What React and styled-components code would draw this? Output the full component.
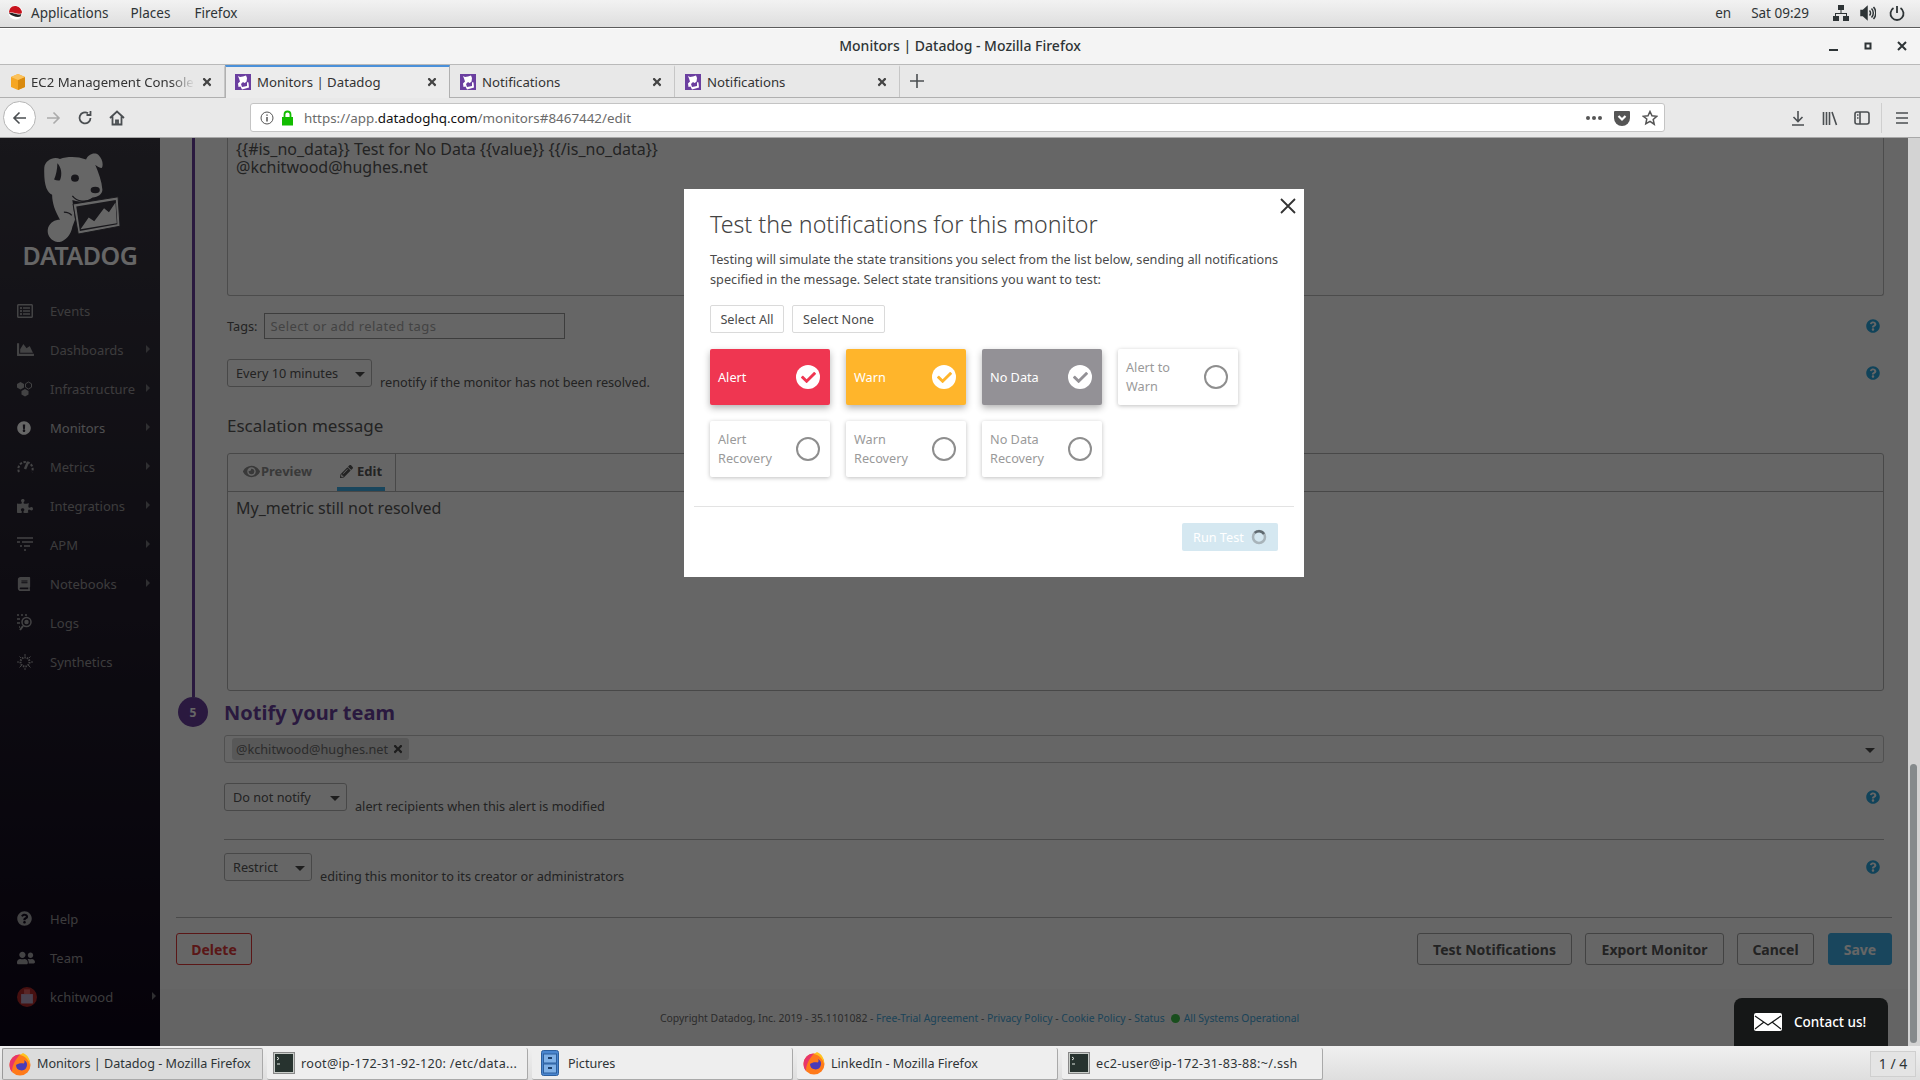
import React from 'react';
import styled, { createGlobalStyle } from 'styled-components';
import {
  FaBook,
  FaChartArea,
  FaCheck,
  FaExclamationCircle,
  FaEye,
  FaPencilAlt,
  FaPuzzlePiece,
  FaQuestionCircle,
  FaRegListAlt,
  FaTimes,
  FaUserFriends,
} from 'react-icons/fa';

const GlobalStyle = createGlobalStyle`
  html, body {
    margin: 0;
    height: 100%;
    overflow: hidden;
    font-family: "Noto Sans", "Open Sans", sans-serif;
  }
  * { box-sizing: border-box; }
`;

const Screen = styled.div`
  width: 1920px;
  height: 1080px;
  display: flex;
  flex-direction: column;
  overflow: hidden;
`;

/* desktop chrome */
const TopBar = styled.div`
  height: 28px;
  flex: none;
  display: flex;
  align-items: center;
  padding: 0 15px 2px 8px;
  font-size: 13.5px;
  color: #2e3436;
  background: linear-gradient(#f2f2f2, #dedede);
  border-bottom: 1px solid #5c5c5c;
`;

const TopItem = styled.span`
  margin-left: ${(p) => p.$gap || 0}px;
`;

const TopIcon = styled(TopItem)`
  display: flex;
`;

const TopRight = styled.div`
  margin-left: auto;
  display: flex;
  align-items: center;
  color: #2e3436;
`;

const TitleBar = styled.div`
  height: 37px;
  flex: none;
  position: relative;
  display: flex;
  align-items: center;
  justify-content: center;
  padding-bottom: 2px;
  font-size: 14px;
  font-weight: 500;
  color: #2e3436;
  background: #f4f4f4;
  border-top: 1px solid #fff;
  border-bottom: 1px solid #b9b9b9;
`;

const WindowControls = styled.div`
  position: absolute;
  right: 11px;
  top: 10px;
  display: flex;
  gap: 20px;
`;

const TabStrip = styled.div`
  height: 33px;
  flex: none;
  display: flex;
  align-items: stretch;
  background: #e8e8e8;
  border-bottom: 1px solid #b0b0b0;
`;

const Tab = styled.div`
  width: 225px;
  display: flex;
  align-items: center;
  gap: 6px;
  padding: 0 11px 1px 9px;
  font-size: 13.2px;
  color: #333;
  position: relative;
  background: ${(p) => (p.$active ? '#ececec' : 'transparent')};
  border-top: 2px solid ${(p) => (p.$active ? '#4a90d9' : 'transparent')};
  border-right: 1px solid ${(p) => (p.$active ? '#b0b0b0' : '#c6c6c6')};
  border-left: 1px solid ${(p) => (p.$active ? '#b0b0b0' : 'transparent')};
  margin-bottom: ${(p) => (p.$active ? '-1px' : '0')};
`;

const TabLabel = styled.span`
  flex: 1;
  overflow: hidden;
  white-space: nowrap;
  -webkit-mask-image: ${(p) => (p.$fade ? 'linear-gradient(90deg, #000 85%, transparent)' : 'none')};
`;

const NewTab = styled.div`
  width: 33px;
  display: flex;
  align-items: center;
  justify-content: center;
`;

const NavBar = styled.div`
  height: 40px;
  flex: none;
  display: flex;
  align-items: center;
  background: #e9e9e9;
  border-bottom: 1px solid #a8a8a8;
  padding-left: 3px;
`;

const BackButton = styled.div`
  width: 33px;
  height: 33px;
  margin-right: 1px;
  border-radius: 50%;
  background: #fff;
  border: 1px solid #b5b5b5;
  display: flex;
  align-items: center;
  justify-content: center;
`;

const NavIcon = styled.div`
  width: ${(p) => p.$w || 32}px;
  margin-left: ${(p) => p.$left || 0}px;
  flex: none;
  display: flex;
  align-items: center;
  justify-content: center;
`;

const UrlBar = styled.div`
  width: 1415px;
  height: 29px;
  margin-left: 117px;
  flex: none;
  display: flex;
  align-items: center;
  background: #fff;
  border: 1px solid #c4c4c4;
  border-radius: 3px;
  padding-left: 9px;
  font-size: 13.4px;
  color: #6b6b6b;
`;

const UrlText = styled.span`
  margin-left: 10px;
  flex: 1;
  b {
    font-weight: 400;
    color: #111;
  }
`;

const NavSeparator = styled.div`
  width: 1px;
  height: 30px;
  background: #cfcfcf;
  margin: 0 3px 0 3px;
`;

const TaskBar = styled.div`
  height: 34px;
  flex: none;
  display: flex;
  align-items: center;
  gap: 4px;
  padding: 1px 4px 0 2px;
  font-size: 12.6px;
  color: #2e3436;
  background: linear-gradient(#f0f0f0, #dedede);
`;

const TaskItem = styled.div`
  width: 261px;
  height: 32px;
  flex: none;
  display: flex;
  align-items: center;
  gap: 6px;
  padding-left: 6px;
  white-space: nowrap;
  overflow: hidden;
  letter-spacing: ${(p) => (p.$digits ? '0.3px' : '0')};
  background: ${(p) => (p.$active ? '#dcdcdc' : '#eeeeee')};
  border: 1px solid #c6c6c6;
  border-top: ${(p) => (p.$active ? '1px solid #9a9a9a' : '0')};
  border-left: ${(p) => (p.$active ? '1px solid #9a9a9a' : '0')};
  border-right: 1px solid #a9a9a9;
  border-bottom: 1px solid #a9a9a9;
  border-radius: 2px;
`;

const Pager = styled.div`
  margin-left: auto;
  width: 46px;
  height: 26px;
  display: flex;
  align-items: center;
  justify-content: center;
  background: #e4e4e4;
  border: 1px solid #cfcfcf;
  font-size: 14px;
`;

/* firefox content */
const Viewport = styled.div`
  flex: 1;
  min-height: 0;
  display: flex;
  position: relative;
  overflow: hidden;
`;

const PageArea = styled.div`
  flex: 1;
  min-width: 0;
  display: flex;
  position: relative;
  overflow: hidden;
  background: #fff;
`;

const ScrollTrack = styled.div`
  width: 12px;
  flex: none;
  background: #d3d3d3;
  padding: 626px 3px 3px 2px;
`;

const ScrollThumb = styled.div`
  height: 100%;
  background: #858a8c;
  border-radius: 4px;
`;

const Backdrop = styled.div`
  position: absolute;
  inset: 0;
  background: rgba(0, 0, 0, 0.6);
`;

/* sidebar */
const Sidebar = styled.nav`
  width: 160px;
  flex: none;
  display: flex;
  flex-direction: column;
  background: linear-gradient(#3c3a44, #0d0519);
  color: #989699;
  font-size: 13px;
`;

const LogoBlock = styled.div`
  height: 153px;
  padding-top: 13px;
  display: flex;
  flex-direction: column;
  align-items: center;
`;

const LogoWord = styled.div`
  font-size: 25px;
  line-height: 26px;
  font-weight: 600;
  letter-spacing: -0.5px;
  color: #fff;
`;

const NavList = styled.div`
  display: flex;
  flex-direction: column;
`;

const SideItem = styled.div`
  height: 39px;
  display: flex;
  align-items: center;
  padding-left: 17px;
  position: relative;
  color: ${(p) => (p.$on ? '#c4c3c6' : 'inherit')};
`;

const SideIcon = styled.div`
  width: 33px;
  flex: none;
  display: flex;
  align-items: center;
  color: ${(p) => (p.$on ? '#fff' : '#a8a7ab')};
`;

const SideArrow = styled.div`
  position: absolute;
  left: ${(p) => p.$left || 146}px;
  top: 15px;
  width: 0;
  height: 0;
  border-left: 4px solid #77757c;
  border-top: 4px solid transparent;
  border-bottom: 4px solid transparent;
`;

const SideFoot = styled.div`
  margin-top: auto;
  padding-bottom: 30px;
`;

/* monitor form */
const Main = styled.main`
  flex: 1;
  min-width: 0;
  display: flex;
  flex-direction: column;
  color: #575757;
  font-size: 12.7px;
`;

const FormBody = styled.div`
  height: 852px;
  flex: none;
  padding: 0 16px 0 15px;
  border-bottom: 1px solid #fafafa;
`;

const Stepper = styled.section`
  margin: 0 8px 0 17px;
  padding-left: 32px;
  height: 559px;
  border-left: 3px solid #6a3f9e;
`;

const MessageBox = styled.div`
  height: 158px;
  padding: 2px 8px 0;
  border: 1px solid #bdbdbd;
  border-top: 0;
  font-size: 16px;
  line-height: 18px;
  overflow: hidden;
  border-radius: 0 0 3px 3px;
`;

const TagsRow = styled.div`
  margin-top: 17px;
  height: 26px;
  display: flex;
  align-items: center;
  gap: 7px;
  padding-right: 4px;
`;

const TagsInput = styled.div`
  width: 301px;
  height: 26px;
  display: flex;
  align-items: center;
  padding: 0 5px;
  border: 1px solid #9a9a9a;
  color: #a8a8a8;
  font-size: 13px;
  letter-spacing: 0.4px;
`;

const HelpMark = styled.span`
  margin-left: auto;
  display: flex;
  align-self: center;
  color: #2aa8e0;
  font-size: 14px;
`;

const OptionRow = styled.div`
  margin-top: ${(p) => p.$top || 0}px;
  height: 28px;
  display: flex;
  align-items: flex-end;
  gap: 8px;
  padding-right: 4px;
`;

const Dropdown = styled.div`
  width: ${(p) => p.$w}px;
  height: 28px;
  flex: none;
  display: flex;
  align-items: center;
  justify-content: space-between;
  padding: 0 6px 0 8px;
  border: 1px solid #b5b5b5;
  border-radius: 3px;
  background: #fff;
`;

const Caret = styled.span`
  width: 0;
  height: 0;
  margin-top: 3px;
  margin-right: ${(p) => p.$right || 0}px;
  border-top: 5px solid #4d4d4d;
  border-left: 5px solid transparent;
  border-right: 5px solid transparent;
`;

const OptionText = styled.span`
  line-height: 18px;
  margin-bottom: -4px;
`;

const SubHeading = styled.h3`
  margin: 27px 0 0;
  font-size: 17px;
  line-height: 24px;
  font-weight: 400;
`;

const Editor = styled.div`
  margin-top: 15px;
  height: 238px;
  border: 1px solid #b5b5b5;
  border-radius: 3px;
`;

const EditorTabs = styled.div`
  width: 168px;
  height: 37px;
  display: flex;
  align-items: stretch;
  padding-left: 12px;
  border-right: 1px solid #b5b5b5;
`;

const EditorTab = styled.div`
  margin-right: 22px;
  display: flex;
  align-items: center;
  gap: ${(p) => (p.$on ? 4 : 1)}px;
  padding: 1px 3px 0;
  font-size: 13px;
  font-weight: 700;
  color: ${(p) => (p.$on ? '#575757' : '#8f8f8f')};
  border-bottom: 4px solid ${(p) => (p.$on ? '#3fb0e8' : 'transparent')};
  svg {
    font-size: ${(p) => (p.$on ? 13 : 17)}px;
  }
`;

const EditorText = styled.div`
  border-top: 1px solid #b5b5b5;
  padding: 6px 8px;
  font-size: 16px;
  line-height: 21px;
`;

const StepHeader = styled.div`
  display: flex;
  align-items: center;
  gap: 16px;
  margin-left: 3px;
  height: 30px;
`;

const StepBadge = styled.div`
  width: 30px;
  height: 30px;
  border-radius: 50%;
  display: flex;
  align-items: center;
  justify-content: center;
  font-size: 12px;
  font-weight: 700;
  color: #fff;
  background: #6a3f9e;
`;

const StepTitle = styled.h2`
  margin: 0;
  font-size: 20px;
  font-weight: 700;
  color: #6a3f9e;
`;

const StepBody = styled.div`
  margin: 8px 8px 0 49px;
`;

const RecipientInput = styled.div`
  height: 28px;
  display: flex;
  align-items: center;
  justify-content: space-between;
  padding: 0 7px;
  border: 1px solid #c8c8c8;
  border-radius: 3px;
`;

const Chip = styled.span`
  height: 22px;
  display: flex;
  align-items: center;
  gap: 4px;
  padding: 0 5px 0 4px;
  background: #dcdcdc;
  border-radius: 3px;
  color: #6e6e6e;
  svg {
    font-size: 12px;
    color: #4a4a4a;
  }
`;

const Rule = styled.hr`
  margin: ${(p) => p.$m};
  height: 1px;
  border: 0;
  background: #b8b8b8;
`;

const Actions = styled.div`
  margin-top: 15px;
  display: flex;
  gap: 13px;
  padding-left: 1px;
`;

const ActionButton = styled.button`
  height: 32px;
  width: ${(p) => p.$w}px;
  margin-right: ${(p) => p.$after || 0}px;
  margin-left: ${(p) => p.$before || 0}px;
  font-family: inherit;
  font-size: 14px;
  font-weight: 700;
  border-radius: 3px;
  padding: 0;
  color: ${(p) => (p.$danger ? '#e03a3a' : p.$primary ? '#fff' : '#575757')};
  background: ${(p) => (p.$primary ? '#3fb0e8' : 'transparent')};
  border: 1px solid ${(p) => (p.$danger ? '#e03a3a' : p.$primary ? '#3fb0e8' : '#a5a5a5')};
`;

const Footer = styled.footer`
  flex: 1;
  background: #fafafa;
  display: flex;
  align-items: center;
  padding: 0 0 0 500px;
  font-size: 10.4px;
  white-space: pre;
  color: #6c6c6c;
  a {
    color: #45a8dc;
  }
`;

const StatusDot = styled.span`
  width: 9px;
  height: 9px;
  border-radius: 50%;
  margin: 0 4px 0 6px;
  background: #3fc24a;
`;

/* modal */
const Modal = styled.div`
  position: absolute;
  left: 684px;
  top: 51px;
  width: 620px;
  height: 388px;
  padding: 21px 26px 0;
  background: #fff;
  color: #4a4a4a;
  font-size: 12.7px;
`;

const CloseButton = styled.div`
  position: absolute;
  right: 6px;
  top: 7px;
  display: flex;
`;

const ModalTitle = styled.h2`
  margin: 0;
  font-size: 23.2px;
  line-height: 28px;
  font-weight: 300;
  color: #444;
`;

const ModalText = styled.p`
  margin: 11px 0 0;
  line-height: 20px;
  white-space: nowrap;
`;

const SelectRow = styled.div`
  display: flex;
  gap: 8px;
  margin-top: 16px;
`;

const SelectButton = styled.div`
  height: 28px;
  width: ${(p) => p.$w}px;
  display: flex;
  align-items: center;
  justify-content: center;
  border: 1px solid #dadada;
  border-radius: 2px;
`;

const Cards = styled.div`
  margin-top: 16px;
  display: grid;
  grid-template-columns: repeat(4, 120px);
  grid-auto-rows: 56px;
  gap: 16px;
`;

const Card = styled.div`
  display: flex;
  align-items: center;
  justify-content: space-between;
  padding: 0 8px;
  line-height: 19px;
  border-radius: 2px;
  color: ${(p) => (p.$color ? '#fff' : '#9a9a9a')};
  background: ${(p) => p.$color || '#fff'};
  box-shadow: ${(p) =>
    p.$color ? '0 3px 7px rgba(0, 0, 0, 0.3)' : '0 1px 4px rgba(0, 0, 0, 0.25)'};
`;

const CardLabel = styled.span`
  width: 76px;
`;

const Radio = styled.span`
  width: 24px;
  height: 24px;
  flex: none;
  margin-right: 2px;
  border: 2px solid #8e8e8e;
  border-radius: 50%;
`;

const Tick = styled.span`
  width: 24px;
  height: 24px;
  flex: none;
  margin-right: 2px;
  display: flex;
  align-items: center;
  justify-content: center;
  border-radius: 50%;
  background: #fff;
  color: ${(p) => p.$color};
  font-size: 15px;
`;

const ModalRule = styled.hr`
  margin: 29px -16px 0;
  height: 1px;
  border: 0;
  background: #e3e3e3;
`;

const ModalFoot = styled.div`
  margin-top: 16px;
  display: flex;
  justify-content: flex-end;
`;

const RunButton = styled.div`
  width: 96px;
  height: 28px;
  display: flex;
  align-items: center;
  justify-content: space-between;
  padding: 0 11px;
  border-radius: 2px;
  color: #fff;
  background: #d5e8f1;
`;

const Contact = styled.div`
  position: absolute;
  right: 20px;
  bottom: 0;
  width: 154px;
  height: 48px;
  display: flex;
  align-items: center;
  gap: 12px;
  padding-left: 20px;
  border-radius: 8px 8px 0 0;
  background: #151717;
  color: #fff;
  font-size: 13.5px;
  font-weight: 500;
`;

/* drawn icons */
const Stroke = ({ w = 16, h = 16, vb = '0 0 16 16', sw = 1.6, color = '#4b4f52', children }) => (
  <svg width={w} height={h} viewBox={vb} fill="none" stroke={color} strokeWidth={sw}>
    {children}
  </svg>
);

const RedHat = () => (
  <svg width="15" height="15" viewBox="0 0 15 15">
    <circle cx="7.5" cy="7.5" r="7" fill="#fff" />
    <path d="M1 8c0-4 2-7 6-7 3 0 6 2 7 6 0 2-2 2-5 1.500C6 8 3 7 1 8z" fill="#c8141e" />
    <path d="M1 8.500c2-1 5 0 8 .8 2 .5 4 .3 4.500-.8l-1 3c-3 1-8 0-11.500-3z" fill="#222" />
  </svg>
);

const DatadogFav = () => (
  <svg width="16" height="16" viewBox="0 0 16 16" style={{ flex: 'none' }}>
    <rect width="16" height="16" fill="#6b3fa0" />
    <path d="M3 2l2 1 3-.5 3-1 1 2.500-.5 4 2 .5.500 5-7 2-1.500-3-2 .5-.5-3.500 2-2-1-3z" fill="#fff" />
    <path d="M6 10l2-2 1.500 1L12 7.500V12l-5 1z" fill="#6b3fa0" />
  </svg>
);

const AwsBox = () => (
  <svg width="16" height="18" viewBox="0 0 16 18" style={{ flex: 'none', marginRight: -1 }}>
    <path d="M8 1l7 3v10l-7 3-7-3V4z" fill="#f5a623" />
    <path d="M8 7v10l7-3V4z" fill="#d98a0e" />
    <path d="M1 4l7 3 7-3-7-3z" fill="#fbc25c" />
  </svg>
);

const Firefox = () => (
  <svg width="22" height="24" viewBox="0 0 22 24" style={{ flex: 'none' }}>
    <circle cx="11" cy="13" r="10.500" fill="#ff7a1a" />
    <path d="M11 2.500C5 2.500.500 7.500.500 13c0 3 1 5 2.500 7 0-6 3-12 8-17.500z" fill="#e8356a" />
    <path d="M7 13a5.500 5.500 0 1 0 8-5c1 2 .5 3-.5 3.500-2-.5-5-.5-7.500 1.500z" fill="#4a3bb8" />
    <path d="M11 3c5 1 9 5 10 10 .5-5-2-10-7-12z" fill="#ffc21f" />
  </svg>
);

const Terminal = () => (
  <svg width="22" height="22" viewBox="0 0 22 22" style={{ flex: 'none' }}>
    <rect x=".5" y=".5" width="21" height="21" fill="#c9cdc9" stroke="#888" />
    <rect x="2" y="2" width="18" height="18" fill="#27332f" />
    <path d="M4 5l2 1.500L4 8M4 12h3" stroke="#dfe5df" fill="none" />
  </svg>
);

const Cabinet = () => (
  <svg width="18" height="26" viewBox="0 0 18 26" style={{ flex: 'none', margin: '0 3px 0 3px' }}>
    <rect x=".5" y=".5" width="17" height="25" rx="2" fill="#4a86cf" stroke="#2c5f9e" />
    <rect x="2.500" y="4" width="13" height="9" fill="#7fb0e6" stroke="#2c5f9e" />
    <rect x="2.500" y="14" width="13" height="9" fill="#7fb0e6" stroke="#2c5f9e" />
    <rect x="7" y="7" width="4" height="2" fill="#1d3f6b" />
    <rect x="7" y="17" width="4" height="2" fill="#1d3f6b" />
  </svg>
);

const DogLogo = () => (
  <svg width="80" height="91" viewBox="125 35 245 278" style={{ marginLeft: 3, flex: 'none' }}>
    <path
      fill="#fff"
      d="M132 85c2-22 30-36 48-26 24-8 54-8 80 2 6-16 26-24 38-14 12 12 16 30 10 40-6 0-14-4-20-10 10 24 20 50 22 76 0 14-14 22-30 24-18 12-42 16-62 8l8 60-8 22c-4 26-26 50-46 46-22-4-34-24-28-44 6-16 20-24 36-24-14-24-24-50-24-76-16-8-26-30-24-84z"
    />
    <path fill="#3c3a44" d="M172 72c12 12 16 34 8 52-6 2-12 0-18-2 6-14 10-32 10-50z" />
    <ellipse cx="226" cy="118" rx="12" ry="11" fill="#3c3a44" />
    <ellipse cx="288" cy="154" rx="14" ry="10" fill="#3c3a44" />
    <path d="M218 172c14 18 40 22 70 8" stroke="#3c3a44" strokeWidth="4" fill="none" />
    <path d="M216 232c-6-8-14-10-24-10" stroke="#3c3a44" strokeWidth="4" fill="none" />
    <path d="M220 197l138-22 6 90-128 24z" fill="#fff" stroke="#3c3a44" strokeWidth="3" />
    <path d="M230 205l121-20 5 74-115 21z" fill="#3c3a44" />
    <path d="M243 274l25-36 17 12 30-40 15 12 20-30 4 64z" fill="#fff" />
  </svg>
);

const Hexes = () => (
  <svg width="16" height="16" viewBox="0 0 16 16">
    <path d="M4.500 1l3.500 2v3.500L4.500 8.500 1 6.500V3z" fill="currentColor" transform="translate(-1 0)" />
    <path d="M11.500 1l3 1.800v3.400l-3 1.800-3-1.800V2.800z" fill="none" stroke="currentColor" />
    <path d="M8 8l3.500 2v3.500L8 15.500l-3.500-2V10z" fill="currentColor" />
  </svg>
);

const Gauge = () => (
  <svg width="17" height="15" viewBox="0 0 17 15" fill="none" stroke="currentColor" strokeWidth="2">
    <path d="M2 13A7 7 0 0 1 8.500 3a7 7 0 0 1 6.500 10" strokeDasharray="2.500 1.500" />
    <path d="M8 10l3-7" strokeWidth="2.500" />
  </svg>
);

const FunnelLines = () => (
  <svg width="16" height="15" viewBox="0 0 16 15" fill="none" stroke="currentColor" strokeWidth="1.500">
    <path d="M0 1h16M0 5h3M5 5h11M3 9h2M7 9h6M7 13h2" />
  </svg>
);

const LogsIcon = () => (
  <svg width="16" height="17" viewBox="0 0 16 17" fill="none" stroke="currentColor" strokeWidth="1.500">
    <path d="M0 1h2M4 1h2M8 1h2M0 5h3M0 9h3M2 13h1" />
    <circle cx="9.500" cy="8" r="4.500" />
    <circle cx="9.500" cy="8" r="1.500" fill="currentColor" />
    <path d="M6 12l-3 4" strokeWidth="2" />
  </svg>
);

const SynthIcon = () => (
  <svg width="16" height="16" viewBox="0 0 16 16" fill="none" stroke="currentColor">
    <circle cx="8" cy="8" r="4.500" strokeWidth="2" strokeDasharray="1.500 1" />
    <path d="M8 0v2M8 14v2M0 8h2M14 8h2M2.500 2.500l1.500 1.500M13.500 2.500L12 4M2.500 13.500L4 12M13.500 13.500L12 12" />
  </svg>
);

const Avatar = () => (
  <svg width="20" height="20" viewBox="0 0 17 17">
    <circle cx="8.500" cy="8.500" r="8.500" fill="#b02a2a" />
    <rect x="3.500" y="6" width="10" height="8" fill="#b9a7c9" />
    <rect x="6" y="2" width="5" height="4" fill="#e06060" />
  </svg>
);

const CheckedCard = ({ label, color }) => (
  <Card $color={color}>
    <CardLabel>{label}</CardLabel>
    <Tick $color={color}>
      <FaCheck />
    </Tick>
  </Card>
);

const OpenCard = ({ label }) => (
  <Card>
    <CardLabel>{label}</CardLabel>
    <Radio />
  </Card>
);

const sideItems = [
  { label: 'Events', icon: <FaRegListAlt size={16} /> },
  { label: 'Dashboards', icon: <FaChartArea size={17} />, more: true },
  { label: 'Infrastructure', icon: <Hexes />, more: true },
  { label: 'Monitors', icon: <FaExclamationCircle size={14} />, more: true, on: true },
  { label: 'Metrics', icon: <Gauge />, more: true },
  { label: 'Integrations', icon: <FaPuzzlePiece size={16} />, more: true },
  { label: 'APM', icon: <FunnelLines />, more: true },
  { label: 'Notebooks', icon: <FaBook size={14} />, more: true },
  { label: 'Logs', icon: <LogsIcon /> },
  { label: 'Synthetics', icon: <SynthIcon /> },
];

const App = () => (
  <Screen>
    <GlobalStyle />
    <TopBar>
      <RedHat />
      <TopItem $gap={8}>Applications</TopItem>
      <TopItem $gap={22}>Places</TopItem>
      <TopItem $gap={24}>Firefox</TopItem>
      <TopRight>
        <TopItem>en</TopItem>
        <TopItem $gap={20}>Sat 09:29</TopItem>
        <TopIcon $gap={24}>
          <svg width="16" height="16" viewBox="0 0 16 16" fill="#2e3436">
            <rect x="5" y="0" width="6" height="5" />
            <rect x="0" y="11" width="6" height="5" />
            <rect x="10" y="11" width="6" height="5" />
            <path d="M7.500 5h1v3H14v3h-1V9H3v2H2V8h5.500z" />
          </svg>
        </TopIcon>
        <TopIcon $gap={11}>
          <svg width="16" height="16" viewBox="0 0 16 16" fill="none" stroke="#2e3436" strokeWidth="1.500">
            <path d="M1 5.500h2L7 2v12L3 10.500H1z" fill="#2e3436" />
            <path d="M9.500 5.500a3.500 3.500 0 0 1 0 5M11.500 3.500a6.500 6.500 0 0 1 0 9M13.500 2a9 9 0 0 1 0 12" />
          </svg>
        </TopIcon>
        <TopIcon $gap={13}>
          <svg width="16" height="16" viewBox="0 0 16 16" fill="none" stroke="#2e3436" strokeWidth="1.800">
            <path d="M4.500 3a6.500 6.500 0 1 0 7 0M8 1v7" />
          </svg>
        </TopIcon>
      </TopRight>
    </TopBar>

    <TitleBar>
      Monitors | Datadog - Mozilla Firefox
      <WindowControls>
        <Stroke w={14} h={14} vb="0 0 14 14" sw={2} color="#2e3436">
          <path d="M2 11h9" />
        </Stroke>
        <Stroke w={14} h={14} vb="0 0 14 14" sw={2} color="#2e3436">
          <rect x="4.500" y="4.500" width="5" height="5" />
        </Stroke>
        <Stroke w={14} h={14} vb="0 0 14 14" sw={2} color="#2e3436">
          <path d="M3 3l8 8M11 3l-8 8" />
        </Stroke>
      </WindowControls>
    </TitleBar>

    <TabStrip>
      <Tab>
        <AwsBox />
        <TabLabel $fade>EC2 Management Console</TabLabel>
        <FaTimes size={12} color="#444" />
      </Tab>
      <Tab $active>
        <DatadogFav />
        <TabLabel>Monitors | Datadog</TabLabel>
        <FaTimes size={12} color="#444" />
      </Tab>
      <Tab>
        <DatadogFav />
        <TabLabel>Notifications</TabLabel>
        <FaTimes size={12} color="#444" />
      </Tab>
      <Tab>
        <DatadogFav />
        <TabLabel>Notifications</TabLabel>
        <FaTimes size={12} color="#444" />
      </Tab>
      <NewTab>
        <Stroke w={14} h={14} vb="0 0 14 14" sw={1.600}>
          <path d="M7 0v14M0 7h14" />
        </Stroke>
      </NewTab>
    </TabStrip>

    <NavBar>
      <BackButton>
        <Stroke>
          <path d="M14 8H2M7.500 2.500L2 8l5.500 5.500" />
        </Stroke>
      </BackButton>
      <NavIcon>
        <Stroke color="#ababab">
          <path d="M2 8h12M8.500 2.500L14 8l-5.500 5.500" />
        </Stroke>
      </NavIcon>
      <NavIcon>
        <Stroke sw={1.800}>
          <path d="M13.500 8A5.500 5.500 0 1 1 11 3.300M13.500 1v4h-4" />
        </Stroke>
      </NavIcon>
      <NavIcon>
        <Stroke sw={1.800}>
          <path d="M1 8l7-6.500L15 8M3.500 6.500V14.500h9V6.500M7 14.500v-4h2v4" />
        </Stroke>
      </NavIcon>
      <UrlBar>
        <Stroke w={14} h={14} vb="0 0 14 14" sw={1} color="#555">
          <circle cx="7" cy="7" r="6" />
          <path d="M7 6v4.500M7 3.500v1.300" strokeWidth="1.500" />
        </Stroke>
        <svg width="13" height="16" viewBox="0 0 13 16" style={{ marginLeft: 7 }}>
          <rect x="1" y="7" width="11" height="8.500" fill="#12bc00" />
          <path d="M3.500 7V4.500a3 3 0 0 1 6 0V7" fill="none" stroke="#12bc00" strokeWidth="1.800" />
        </svg>
        <UrlText>
          https://app.<b>datadoghq.com</b>/monitors#8467442/edit
        </UrlText>
        <Stroke w={18} h={6} vb="0 0 18 6" sw={0} color="#555">
          <circle cx="3" cy="3" r="2" fill="#555" />
          <circle cx="9" cy="3" r="2" fill="#555" />
          <circle cx="15" cy="3" r="2" fill="#555" />
        </Stroke>
        <svg width="16" height="16" viewBox="0 0 16 16" style={{ marginLeft: 11 }}>
          <path d="M1 1h14a1 1 0 0 1 1 1v6a8 8 0 0 1-16 0V2a1 1 0 0 1 1-1z" fill="#555" />
          <path d="M4.500 6L8 9.500 11.500 6" fill="none" stroke="#fff" strokeWidth="2.200" />
        </svg>
        <svg width="16" height="16" viewBox="0 0 16 16" style={{ marginLeft: 12, marginRight: 6 }}>
          <path d="M8 1.500l2 4.300 4.700.5-3.500 3.200 1 4.700L8 11.300l-4.200 2.400 1-4.700L1.300 6.300 6 5.800z" fill="none" stroke="#555" strokeWidth="1.500" />
        </svg>
      </UrlBar>
      <NavIcon $w={32} $left={117}>
        <Stroke>
          <path d="M8 1v10M3.500 7L8 11.500 12.500 7M2 15h12" />
        </Stroke>
      </NavIcon>
      <NavIcon $w={32}>
        <Stroke>
          <path d="M1.500 2v13M4.500 2v13M7.500 2v13M10 2l4.500 13" />
        </Stroke>
      </NavIcon>
      <NavIcon $w={32}>
        <Stroke>
          <rect x="1" y="2" width="14" height="12" rx="2" />
          <path d="M6 2v12M3 5h1.500M3 8h1.500" />
        </Stroke>
      </NavIcon>
      <NavSeparator />
      <NavIcon $w={34}>
        <Stroke>
          <path d="M2 3h12M2 8h12M2 13h12" />
        </Stroke>
      </NavIcon>
    </NavBar>

    <Viewport>
      <PageArea>
        <Sidebar>
          <LogoBlock>
            <DogLogo />
            <LogoWord>DATADOG</LogoWord>
          </LogoBlock>
          <NavList>
            {sideItems.map((item) => (
              <SideItem key={item.label} $on={item.on}>
                <SideIcon $on={item.on}>{item.icon}</SideIcon>
                {item.label}
                {item.more && <SideArrow />}
              </SideItem>
            ))}
          </NavList>
          <SideFoot>
            <SideItem>
              <SideIcon>
                <FaQuestionCircle size={15} />
              </SideIcon>
              Help
            </SideItem>
            <SideItem>
              <SideIcon>
                <FaUserFriends size={18} />
              </SideIcon>
              Team
            </SideItem>
            <SideItem>
              <SideIcon>
                <Avatar />
              </SideIcon>
              kchitwood
              <SideArrow $left={152} />
            </SideItem>
          </SideFoot>
        </Sidebar>

        <Main>
          <FormBody>
            <Stepper>
              <MessageBox>
                <div>{'{{#is_no_data}} Test for No Data {{value}} {{/is_no_data}}'}</div>
                <div>@kchitwood@hughes.net</div>
              </MessageBox>
              <TagsRow>
                Tags:
                <TagsInput>Select or add related tags</TagsInput>
                <HelpMark>
                  <FaQuestionCircle />
                </HelpMark>
              </TagsRow>
              <OptionRow $top={20}>
                <Dropdown $w={145}>
                  Every 10 minutes
                  <Caret />
                </Dropdown>
                <OptionText>renotify if the monitor has not been resolved.</OptionText>
                <HelpMark>
                  <FaQuestionCircle />
                </HelpMark>
              </OptionRow>
              <SubHeading>Escalation message</SubHeading>
              <Editor>
                <EditorTabs>
                  <EditorTab>
                    <FaEye />
                    Preview
                  </EditorTab>
                  <EditorTab $on>
                    <FaPencilAlt />
                    Edit
                  </EditorTab>
                </EditorTabs>
                <EditorText>My_metric still not resolved</EditorText>
              </Editor>
            </Stepper>
            <StepHeader>
              <StepBadge>5</StepBadge>
              <StepTitle>Notify your team</StepTitle>
            </StepHeader>
            <StepBody>
              <RecipientInput>
                <Chip>
                  @kchitwood@hughes.net
                  <FaTimes />
                </Chip>
                <Caret $right={1} />
              </RecipientInput>
              <OptionRow $top={20}>
                <Dropdown $w={123}>
                  Do not notify
                  <Caret />
                </Dropdown>
                <OptionText>alert recipients when this alert is modified</OptionText>
                <HelpMark>
                  <FaQuestionCircle />
                </HelpMark>
              </OptionRow>
              <Rule $m="28px 0 13px" />
              <OptionRow>
                <Dropdown $w={88}>
                  Restrict
                  <Caret />
                </Dropdown>
                <OptionText>editing this monitor to its creator or administrators</OptionText>
                <HelpMark>
                  <FaQuestionCircle />
                </HelpMark>
              </OptionRow>
            </StepBody>
            <Rule $m="36px 0 0 1px" />
            <Actions>
              <ActionButton $danger $w={76} $after={1152}>
                Delete
              </ActionButton>
              <ActionButton $w={155}>Test Notifications</ActionButton>
              <ActionButton $w={139}>Export Monitor</ActionButton>
              <ActionButton $w={77}>Cancel</ActionButton>
              <ActionButton $primary $w={64} $before={1}>
                Save
              </ActionButton>
            </Actions>
          </FormBody>
          <Footer>
            Copyright Datadog, Inc. 2019 - 35.1101082 - <a>Free-Trial Agreement</a> - <a>Privacy Policy</a> - <a>Cookie Policy</a> - <a>Status</a>
            <StatusDot />
            <a>All Systems Operational</a>
          </Footer>
        </Main>

        <Backdrop />

        <Modal>
          <CloseButton>
            <Stroke w={20} h={20} vb="0 0 20 20" sw={1.800} color="#333">
              <path d="M3 3l14 14M17 3L3 17" />
            </Stroke>
          </CloseButton>
          <ModalTitle>Test the notifications for this monitor</ModalTitle>
          <ModalText>
            Testing will simulate the state transitions you select from the list below, sending all notifications
            <br />
            specified in the message. Select state transitions you want to test:
          </ModalText>
          <SelectRow>
            <SelectButton $w={74}>Select All</SelectButton>
            <SelectButton $w={93}>Select None</SelectButton>
          </SelectRow>
          <Cards>
            <CheckedCard label="Alert" color="#ef3651" />
            <CheckedCard label="Warn" color="#ffb52b" />
            <CheckedCard label="No Data" color="#939196" />
            <OpenCard label="Alert to Warn" />
            <OpenCard label="Alert Recovery" />
            <OpenCard label="Warn Recovery" />
            <OpenCard label="No Data Recovery" />
          </Cards>
          <ModalRule />
          <ModalFoot>
            <RunButton>
              Run Test
              <svg width="16" height="16" viewBox="0 0 16 16" fill="none" strokeWidth="2.500">
                <circle cx="8" cy="8" r="6" stroke="#a8b4ba" />
                <path d="M3.800 3.800A6 6 0 0 1 13 5" stroke="#5f6a70" />
              </svg>
            </RunButton>
          </ModalFoot>
        </Modal>

        <Contact>
          <svg width="28" height="18" viewBox="0 0 28 18">
            <rect width="28" height="18" rx="2" fill="#fff" />
            <path d="M1 3l13 9 13-9M1 16l9-7M27 16l-9-7" fill="none" stroke="#151717" strokeWidth="1.200" />
          </svg>
          Contact us!
        </Contact>
      </PageArea>
      <ScrollTrack>
        <ScrollThumb />
      </ScrollTrack>
    </Viewport>

    <TaskBar>
      <TaskItem $active>
        <Firefox />
        Monitors | Datadog - Mozilla Firefox
      </TaskItem>
      <TaskItem $digits>
        <Terminal />
        root@ip-172-31-92-120: /etc/data...
      </TaskItem>
      <TaskItem>
        <Cabinet />
        Pictures
      </TaskItem>
      <TaskItem>
        <Firefox />
        LinkedIn - Mozilla Firefox
      </TaskItem>
      <TaskItem $digits>
        <Terminal />
        ec2-user@ip-172-31-83-88:~/.ssh
      </TaskItem>
      <Pager>1 / 4</Pager>
    </TaskBar>
  </Screen>
);

export default App;
